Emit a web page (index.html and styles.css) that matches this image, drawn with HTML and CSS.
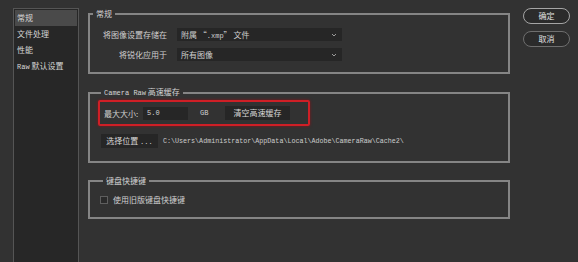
FILE: index.html
```html
<html>
<head>
    <title>Camera Raw 首选项</title>
    <link rel="stylesheet" href="styles.css">
</head>
<body>
    <div class="dialog">
        <ul class="nav">
            <li class="selected">常规</li>
            <li>文件处理</li>
            <li>性能</li>
            <li><span class="mono">Raw</span> 默认设置</li>
        </ul>

        <div class="main">
            <fieldset class="group general">
                <legend>常规</legend>
                <div class="form">
                    <label>将图像设置存储在</label>
                    <div class="select">附属 “<span class="mono">.xmp</span>” 文件
                        <svg class="arrow" width="6" height="4" viewBox="0 0 6 4"><path d="M1 1 L3 3 L5 1" fill="none" stroke="#9a9a9a" stroke-width="1"/></svg>
                    </div>
                    <label>将锐化应用于</label>
                    <div class="select">所有图像
                        <svg class="arrow" width="6" height="4" viewBox="0 0 6 4"><path d="M1 1 L3 3 L5 1" fill="none" stroke="#9a9a9a" stroke-width="1"/></svg>
                    </div>
                </div>
            </fieldset>

            <fieldset class="group cache">
                <legend><span class="mono">Camera Raw</span> 高速缓存</legend>
                <div class="highlight">
                    <span class="field-label">最大大小:</span>
                    <div class="input mono">5.0</div>
                    <span class="unit mono">GB</span>
                    <div class="button purge">清空高速缓存</div>
                </div>
                <div class="location">
                    <div class="button choose">选择位置 <span class="mono">...</span></div>
                    <span class="path mono">C:\Users\Administrator\AppData\Local\Adobe\CameraRaw\Cache2\</span>
                </div>
            </fieldset>

            <fieldset class="group shortcuts">
                <legend>键盘快捷键</legend>
                <div class="check-row">
                    <span class="checkbox"></span>
                    <span>使用旧版键盘快捷键</span>
                </div>
            </fieldset>
        </div>

        <div class="actions">
            <div class="pill">确定</div>
            <div class="pill cancel">取消</div>
        </div>
    </div>
</body>
</html>
```

FILE: styles.css
```css
body {
  margin: 0;
  background: #323232;
  color: #cfcfcf;
  font-family: "Noto Sans CJK SC", "Noto Sans", sans-serif;
  font-size: 8px;
  overflow: hidden;
}
.mono {
  font-family: "Liberation Mono", "DejaVu Sans Mono", monospace;
  font-size: 7px;
}
.dialog {
  display: flex;
  align-items: flex-start;
  height: 262px;
}

/* left list */
.nav {
  list-style: none;
  margin: 8px 0 0 13px;
  padding: 1px 1px 0 1px;
  width: 62px;
  height: 252px;
  background: #272727;
  border: 1px solid #555555;
  border-bottom: none;
}
.nav li {
  height: 16px;
  line-height: 16px;
  padding-left: 2px;
  white-space: nowrap;
  color: #d6d6d6;
}
.nav li.selected {
  background: #4a4a4a;
}

/* groups */
.main {
  margin-left: 9px;
  width: 422px;
}
.group {
  margin: 0;
  padding: 0;
  border: 2px solid #858585;
}
.group legend {
  margin-left: 3px;
  padding: 0 3px;
  line-height: 10px;
  color: #d4d4d4;
}
.general {
  margin-top: 9px;
  padding: 9px 0 11px 0;
}
.cache {
  margin-top: 13px;
  padding: 2px 0 13px 8px;
}
.shortcuts {
  margin-top: 13px;
  padding: 8px 0 12px 10px;
}

.form {
  display: grid;
  grid-template-columns: 77px 165px;
  column-gap: 10px;
  row-gap: 7px;
  align-items: center;
}
.form label {
  text-align: right;
}
.select {
  position: relative;
  height: 13px;
  line-height: 13px;
  padding-left: 4px;
  background: #262626;
}
.select .arrow {
  position: absolute;
  right: 5px;
  top: 5px;
}

/* cache */
.highlight {
  display: flex;
  align-items: center;
  width: 204px;
  height: 22px;
  padding-left: 4px;
  border: 2px solid #cf1f26;
  border-radius: 2px;
  box-shadow: 0 0 3px #8a1218;
}
.field-label {
  width: 39px;
}
.input {
  width: 41px;
  height: 13px;
  line-height: 13px;
  padding-left: 4px;
  background: #262626;
  color: #d4d4d4;
}
.unit {
  margin-left: 12px;
  width: 25px;
}
.button {
  height: 14px;
  line-height: 14px;
  text-align: center;
  background: #262626;
  color: #d8d8d8;
}
.purge {
  width: 65px;
}
.location {
  display: flex;
  align-items: center;
  margin-top: 8px;
  margin-left: 3px;
}
.choose {
  width: 57px;
}
.path {
  margin-left: 5px;
  font-size: 6.7px;
  color: #cccccc;
}

/* shortcuts */
.check-row {
  display: flex;
  align-items: center;
}
.checkbox {
  width: 6px;
  height: 6px;
  margin-right: 5px;
  border: 1px solid #5e5e5e;
  background: #2a2a2a;
}

/* buttons */
.actions {
  margin-left: 13px;
  margin-top: 8px;
  width: 47px;
}
.pill {
  height: 14px;
  line-height: 14px;
  text-align: center;
  border: 1.5px solid #a5a5a5;
  border-radius: 9px;
  background: #2b2b2b;
  color: #e0e0e0;
}
.cancel {
  margin-top: 7px;
  border-color: #6e6e6e;
}
```
